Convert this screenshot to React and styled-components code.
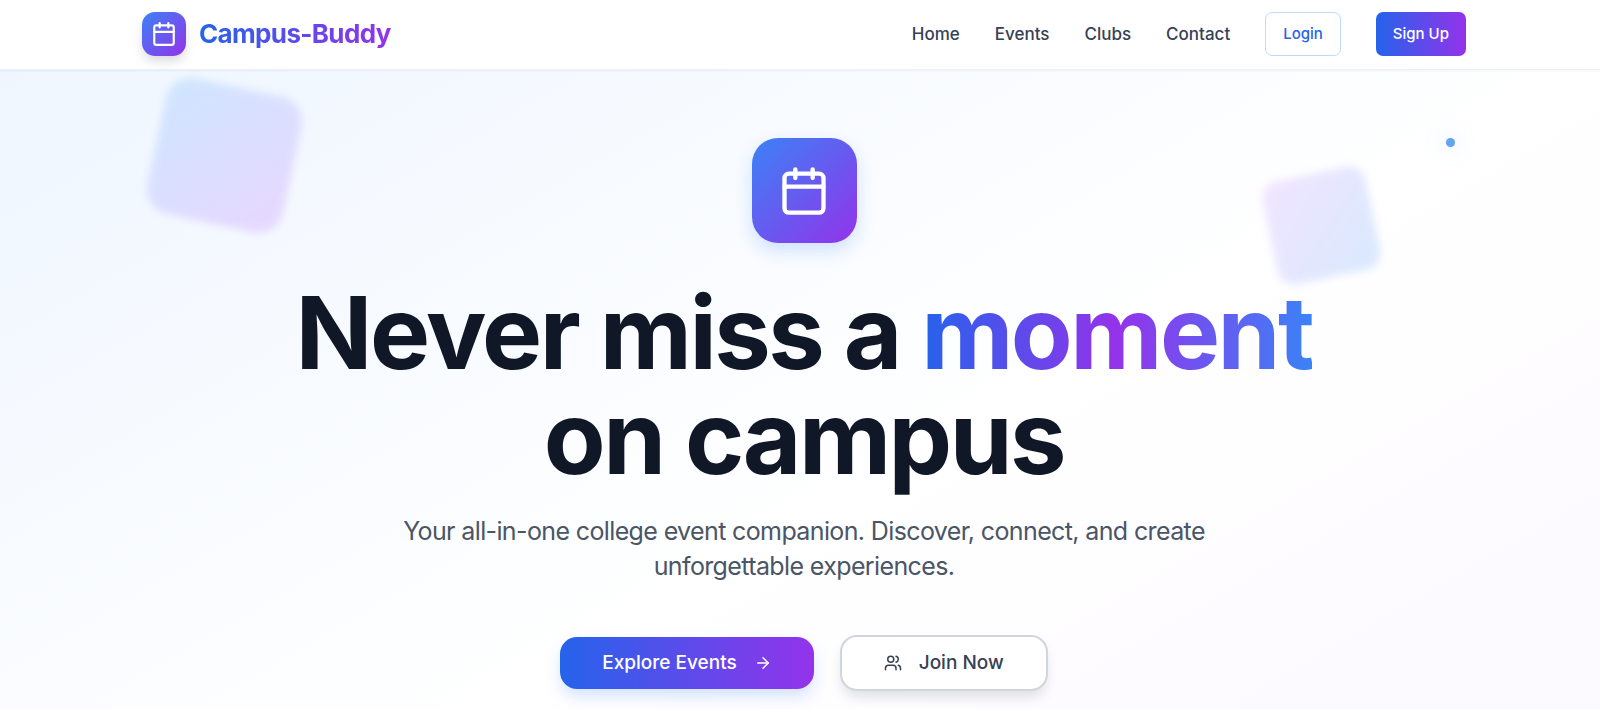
import React from 'react';
import styled, { createGlobalStyle } from 'styled-components';
import { Calendar, ArrowRight, Users } from 'lucide-react';

const GlobalStyle = createGlobalStyle`
  *, *::before, *::after { box-sizing: border-box; }
  body {
    margin: 0;
    background: #ffffff;
    font-family: Inter, "Liberation Sans", sans-serif;
    color: #101828;
    overflow-x: hidden;
  }
  a { text-decoration: none; color: inherit; }
  button { font-family: inherit; cursor: pointer; }
`;

const Page = styled.div`
  min-height: 100vh;
  display: flex;
  flex-direction: column;
  overflow: hidden;
`;

const Header = styled.header`
  position: relative;
  z-index: 1;
  padding-left: 8px;
  background: #ffffff;
  border-bottom: 1px solid #eef0f5;
  box-shadow: 0 1px 2px rgba(16, 24, 40, 0.05);
`;

const HeaderInner = styled.div`
  max-width: 1324px;
  margin: 0 auto;
  padding: 12px 0 13px;
  display: flex;
  align-items: center;
  justify-content: space-between;
`;

const Brand = styled.a`
  display: flex;
  align-items: center;
  gap: 13px;
`;

const IconTile = styled.span`
  display: flex;
  align-items: center;
  justify-content: center;
  width: ${(p) => p.$size}px;
  height: ${(p) => p.$size}px;
  border-radius: ${(p) => p.$radius}px;
  color: #ffffff;
  background: linear-gradient(to bottom right, #3b82f6, #9333ea);
  box-shadow: ${(p) => p.$shadow};
`;

const BrandName = styled.span`
  font-size: 26px;
  line-height: 36px;
  font-weight: 700;
  letter-spacing: -0.025em;
  color: transparent;
  background: linear-gradient(to right, #2563eb, #9333ea);
  background-clip: text;
  -webkit-background-clip: text;
`;

const Nav = styled.nav`
  display: flex;
  align-items: center;
  gap: 35px;
`;

const NavLink = styled.a`
  font-size: 17px;
  line-height: 26px;
  font-weight: 500;
  color: #364153;
`;

const NavButton = styled.button`
  height: 44px;
  padding: 0 17px;
  border-radius: 7px;
  border: ${(p) => (p.$primary ? 'none' : '1px solid #bedbff')};
  background: ${(p) => (p.$primary ? 'linear-gradient(to right, #2563eb, #9333ea)' : '#ffffff')};
  color: ${(p) => (p.$primary ? '#ffffff' : '#2563eb')};
  font-size: 15px;
  line-height: 22px;
  font-weight: 500;
`;

const Hero = styled.main`
  position: relative;
  flex: 1;
  padding: 68px 0 17px 8px;
  display: flex;
  flex-direction: column;
  align-items: center;
  text-align: center;
  background: linear-gradient(to bottom right, #eff6ff, #ffffff 50%, #faf5ff) no-repeat;
  background-size: 100% 145%;
`;

const Blob = styled.div`
  position: absolute;
  top: ${(p) => p.$top}px;
  width: ${(p) => p.$size}px;
  height: ${(p) => p.$size}px;
  filter: blur(4px);
`;

const BlueBlob = styled(Blob)`
  left: 155px;
  border-radius: 26px;
  transform: rotate(12deg);
  background: linear-gradient(to bottom right, #c6e2ff, #e5cfff);
  opacity: 0.8;
`;

const PurpleBlob = styled(Blob)`
  right: 226px;
  border-radius: 17px;
  transform: rotate(-12deg);
  background: linear-gradient(to bottom right, #e9d5ff, #bfdbfe);
  opacity: 0.6;
`;

const Dot = styled.div`
  position: absolute;
  top: 68px;
  right: 145px;
  width: 9px;
  height: 9px;
  border-radius: 50%;
  background: #60a5ee;
  box-shadow: 0 0 20px rgba(96, 165, 250, 0.4);
`;

const Title = styled.h1`
  position: relative;
  max-width: 1116px;
  margin: 37px 0 0;
  font-size: 101px;
  line-height: 105px;
  font-weight: 700;
  letter-spacing: -0.025em;
  color: #101828;
`;

const Highlight = styled.span`
  color: transparent;
  background: linear-gradient(to right, #2563eb, #9333ea, #3b82f6);
  background-clip: text;
  -webkit-background-clip: text;
`;

const Lead = styled.p`
  max-width: 836px;
  margin: 24px 0 0;
  font-size: 25px;
  line-height: 35px;
  font-weight: 400;
  letter-spacing: -0.025em;
  color: #4a5565;
`;

const Actions = styled.div`
  display: flex;
  align-items: center;
  gap: 26px;
  margin-top: 51px;
`;

const ActionButton = styled.button`
  display: flex;
  align-items: center;
  gap: 17px;
  height: ${(p) => (p.$primary ? 52 : 56)}px;
  padding: 0 42px;
  border-radius: 17px;
  border: ${(p) => (p.$primary ? 'none' : '2px solid #d1d5dc')};
  background: ${(p) => (p.$primary ? 'linear-gradient(to right, #2563eb, #9333ea)' : '#ffffff')};
  color: ${(p) => (p.$primary ? '#ffffff' : '#364153')};
  box-shadow: ${(p) =>
    p.$primary
      ? '0 8px 16px -2px rgba(59, 130, 246, 0.25)'
      : '0 8px 14px -3px rgba(16, 24, 40, 0.14)'};
  font-size: 19px;
  line-height: 30px;
  font-weight: 500;
`;

const links = ['Home', 'Events', 'Clubs', 'Contact'];

export default function App() {
  return (
    <Page>
      <GlobalStyle />
      <Header>
        <HeaderInner>
          <Brand href="#home">
            <IconTile $size={44} $radius={13} $shadow="0 6px 12px -2px rgba(16, 24, 40, 0.18)">
              <Calendar size={26} strokeWidth={2} aria-hidden="true" />
            </IconTile>
            <BrandName>Campus-Buddy</BrandName>
          </Brand>
          <Nav>
            {links.map((label) => (
              <NavLink key={label} href={`#${label.toLowerCase()}`}>{label}</NavLink>
            ))}
            <NavButton type="button">Login</NavButton>
            <NavButton type="button" $primary>Sign Up</NavButton>
          </Nav>
        </HeaderInner>
      </Header>
      <Hero>
        <BlueBlob $size={139} $top={16} />
        <PurpleBlob $size={105} $top={103} />
        <Dot />
        <IconTile $size={105} $radius={26} $shadow="0 8px 18px rgba(59, 130, 246, 0.22)">
          <Calendar size={52} strokeWidth={2} aria-hidden="true" />
        </IconTile>
        <Title>
          Never miss a <Highlight>moment</Highlight>
          <br />
          on campus
        </Title>
        <Lead>
          Your all-in-one college event companion. Discover, connect, and create
          unforgettable experiences.
        </Lead>
        <Actions>
          <ActionButton type="button" $primary>
            Explore Events
            <ArrowRight size={18} aria-hidden="true" />
          </ActionButton>
          <ActionButton type="button">
            <Users size={18} aria-hidden="true" />
            Join Now
          </ActionButton>
        </Actions>
      </Hero>
    </Page>
  );
}
